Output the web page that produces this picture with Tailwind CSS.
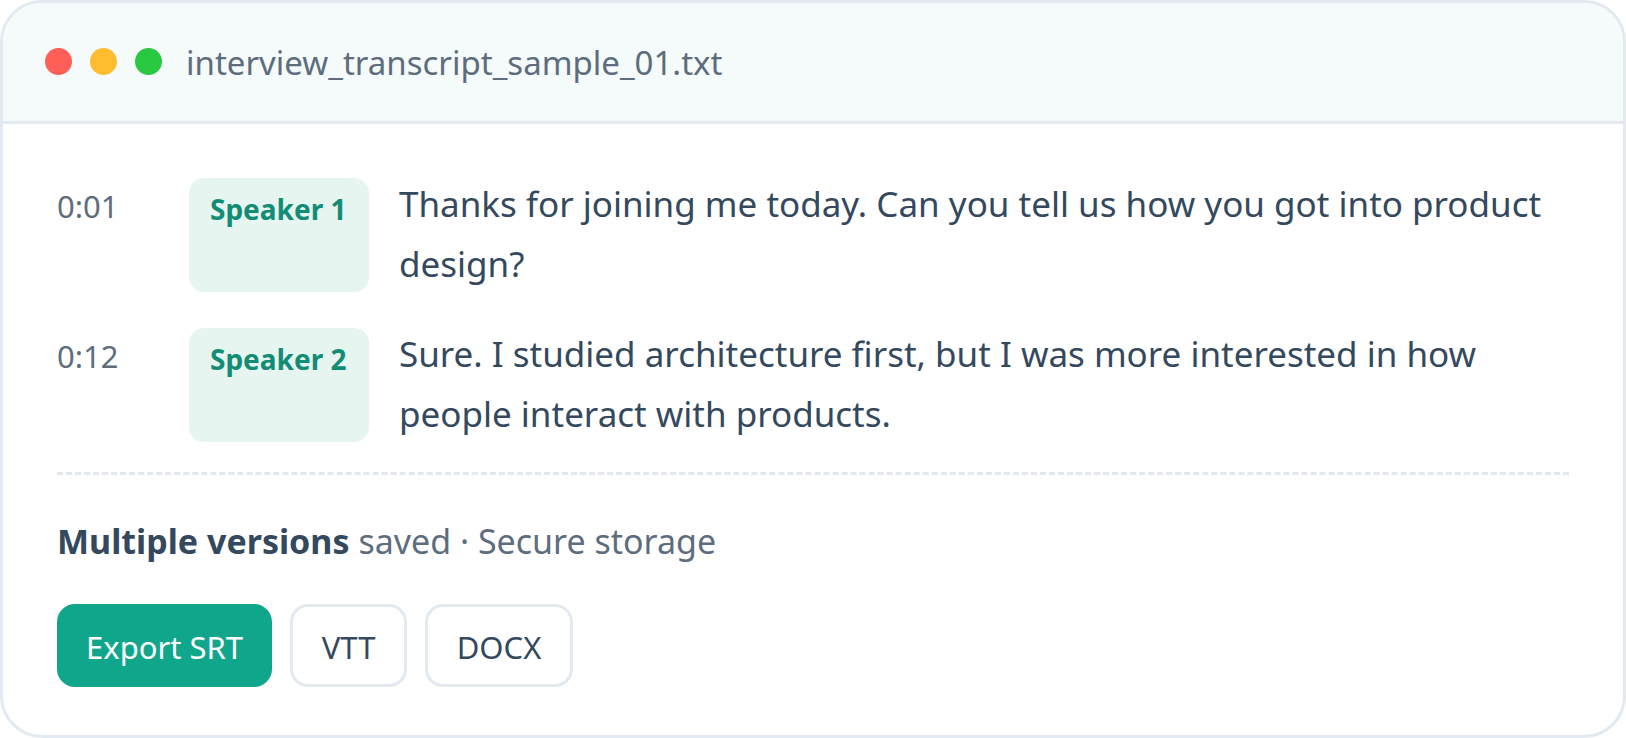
<!DOCTYPE html>
<html lang="en">
<head>
<meta charset="utf-8">
<meta name="viewport" content="width=device-width, initial-scale=1">
<title>interview_transcript_sample_01.txt</title>
<script src="https://cdn.jsdelivr.net/npm/@tailwindcss/browser@4"></script>
</head>
<body class="bg-white font-['Noto_Sans','Open_Sans',sans-serif] text-[#34495e]">
<main class="min-h-screen overflow-hidden rounded-[42px] border-3 border-[#e3e9f1] bg-white">
  <header class="flex h-[121px] items-center gap-[18px] border-b-3 border-[#e3e9f1] bg-[#f5fafb] px-[42px] pb-0.5">
    <span class="size-[27px] shrink-0 rounded-full bg-[#ff5f57]"></span>
    <span class="size-[27px] shrink-0 rounded-full bg-[#febc2e]"></span>
    <span class="size-[27px] shrink-0 rounded-full bg-[#28c840]"></span>
    <h1 class="mt-1 ml-1.5 text-[33px] leading-[48px] text-[#5d6d7e]">interview_transcript_sample_01.txt</h1>
  </header>
  <div class="px-[54px] pt-[50px] pb-12">
    <div class="flex flex-col gap-[30px]">
      <div class="grid grid-cols-[102px_180px_1fr] gap-x-[30px]">
        <time class="mt-0.5 text-[31px] leading-[60px] text-[#5d6d7e]">0:01</time>
        <span class="mt-1 mb-0.5 rounded-[15px] bg-[#e6f5f0] px-[21px] py-[7px] text-[28px] leading-[49px] font-bold whitespace-nowrap text-[#128c74]">Speaker 1</span>
        <p class="text-[35px] leading-[60px]">Thanks for joining me today. Can you tell us how you got into product design?</p>
      </div>
      <div class="grid grid-cols-[102px_180px_1fr] gap-x-[30px]">
        <time class="mt-0.5 text-[31px] leading-[60px] text-[#5d6d7e]">0:12</time>
        <span class="mt-1 mb-0.5 rounded-[15px] bg-[#e6f5f0] px-[21px] py-[7px] text-[28px] leading-[49px] font-bold whitespace-nowrap text-[#128c74]">Speaker 2</span>
        <p class="text-[35px] leading-[60px]">Sure. I studied architecture first, but I was more interested in how people interact with products.</p>
      </div>
    </div>
    <footer class="mt-7 border-t-3 border-dashed border-[#e3e8ee] pt-9">
      <p class="text-[34px] leading-[60px] text-[#5d6d7e]"><strong class="font-bold text-[#34495e]">Multiple versions</strong> saved · Secure storage</p>
      <div class="mt-[33px] flex flex-wrap gap-[18px] text-[31px] leading-[41px]">
        <button type="button" class="rounded-[18px] border-3 border-[#10a68c] bg-[#10a68c] px-[26px] pt-5 pb-4 text-white">Export SRT</button>
        <button type="button" class="min-w-[117px] rounded-[18px] border-3 border-[#e3e9f1] bg-white px-[26px] pt-5 pb-4">VTT</button>
        <button type="button" class="min-w-[148px] rounded-[18px] border-3 border-[#e3e9f1] bg-white px-[26px] pt-5 pb-4">DOCX</button>
      </div>
    </footer>
  </div>
</main>
</body>
</html>
